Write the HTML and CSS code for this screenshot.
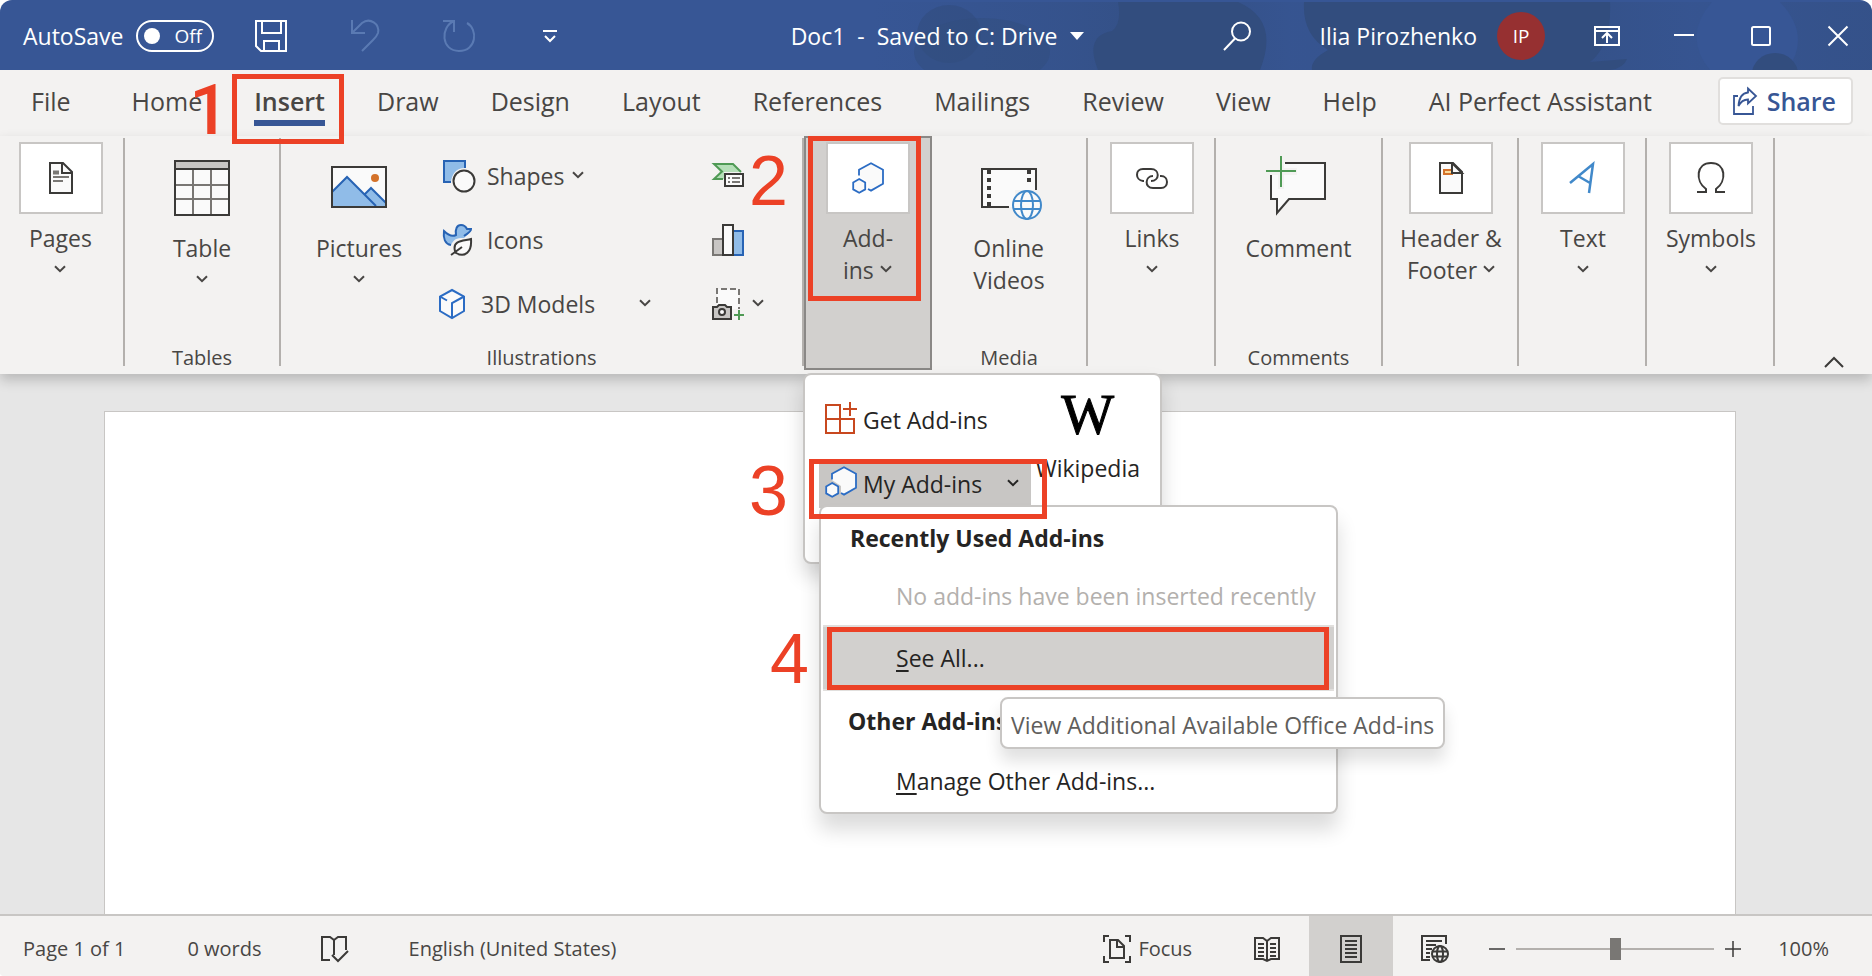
FILE: index.html
```html
<!DOCTYPE html>
<html lang="en">
  <head>
    <meta charset="utf-8" />
    <meta name="viewport" content="width=device-width, initial-scale=1" />
    <title>Doc1 - Word</title>
    <link rel="stylesheet" href="styles.css">
  </head>
  <body>
    <svg class="sprite" aria-hidden="true">
      <symbol id="chevron" viewBox="0 0 12 8">
        <path d="M1 1.2 L6 6.2 L11 1.2" fill="none" stroke="currentColor" stroke-width="2" />
      </symbol>
      <symbol id="hexagons" viewBox="0 0 32 32">
        <path d="M19 1.5 L31 8 V22 L19 29 L16 27.5 V20 L7 14 V8 Z" fill="#fafafa" />
        <path d="M7 13.5 V7.8 L19 1.2 L31 7.8 V21.8 L19 28.6 L16 27" fill="none" stroke="#2b6cc4" stroke-width="1.8" />
        <path d="M7.2 17 L13.2 20.4 V27.4 L7.2 30.8 L1.2 27.4 V20.4 Z" fill="#fafafa" stroke="#2b6cc4" stroke-width="1.8" />
      </symbol>
    </svg>
    <div class="window">
      <!-- Title bar -->
      <header class="titlebar">
        <svg class="titlebar-art" viewBox="0 0 1000 70" preserveAspectRatio="xMaxYMid slice" aria-hidden="true">
          <defs>
            <linearGradient id="haze">
              <stop offset="0" stop-color="#324d7e" stop-opacity="0" />
              <stop offset="0.2" stop-color="#324d7e" stop-opacity="0.4" />
              <stop offset="0.3" stop-color="#324d7e" stop-opacity="0.7" />
              <stop offset="0.42" stop-color="#324d7e" stop-opacity="0.2" />
              <stop offset="0.72" stop-color="#324d7e" stop-opacity="0.5" />
              <stop offset="0.82" stop-color="#324d7e" stop-opacity="0.2" />
              <stop offset="1" stop-color="#324d7e" stop-opacity="0.5" />
            </linearGradient>
          </defs>
          <rect y="2" width="1000" height="68" fill="url(#haze)" />
          <ellipse cx="77" cy="34" rx="32" ry="29" opacity="0.6" />
          <ellipse cx="110" cy="52" rx="68" ry="34" opacity="0.5" />
          <path d="M226 70 Q212 36 240 31 Q250 24 246 2 H366 Q408 20 388 70 Z" />
          <path d="M432 2 H738 Q740 45 718 62 L755 59 Q752 68 738 70 H440 Q438 60 456 50 Q430 35 432 2 Z" />
          <path d="M840 2 H908 Q940 36 915 70 H838 Q810 36 840 2 Z" fill="#375695" />
          <ellipse cx="903" cy="74" rx="23" ry="21" />
        </svg>
        <div class="quick-access">
          <label class="autosave">
            AutoSave
            <span class="toggle">
              <input type="checkbox" />
              Off
            </span>
          </label>
          <button class="icon-btn" aria-label="Save">
            <svg width="32" height="32" viewBox="0 0 32 32" fill="none" stroke="#fff" stroke-width="2">
              <path d="M1 1 H31 V31 H6 L1 26 Z M7 1 V13 H26 V1 M9 31 V21 H24 V31" />
            </svg>
          </button>
          <button class="icon-btn dim" aria-label="Undo">
            <svg width="28" height="32" viewBox="0 0 28 32" fill="none" stroke="currentColor" stroke-width="2">
              <path d="M1 0 V13 H14 M1 13 L11 3 C19 -3 29 4 27 13 C26 16 24 18 22 20 L11 31" />
            </svg>
          </button>
          <button class="icon-btn dim" aria-label="Redo">
            <svg width="36" height="32" viewBox="0 0 36 32" fill="none" stroke="currentColor" stroke-width="2">
              <path d="M0 1 H11 V12 M11 1 C-3 7 -2 31 16 31 C34 31 35 9 24 3" />
            </svg>
          </button>
          <button class="icon-btn" aria-label="Customize Quick Access Toolbar">
            <svg width="14" height="14" viewBox="0 0 14 14" fill="none" stroke="#fff" stroke-width="2">
              <path d="M0 2 H14 M2 7 L7 12 L12 7" />
            </svg>
          </button>
        </div>
        <button class="doc-title">
          Doc1&nbsp; -&nbsp; Saved to C: Drive
          <svg width="14" height="8" viewBox="0 0 14 8"><path d="M0 0 H14 L7 8 Z" fill="#fff" /></svg>
        </button>
        <div class="window-tools">
          <button class="icon-btn search" aria-label="Search">
            <svg width="28" height="30" viewBox="0 0 28 30" fill="none" stroke="#fff" stroke-width="2">
              <circle cx="18" cy="10.500" r="9" />
              <path d="M12 17.500 L1 29" />
            </svg>
          </button>
          <button class="account">
            Ilia Pirozhenko
            <span class="avatar">IP</span>
          </button>
          <div class="window-buttons">
            <button class="icon-btn" aria-label="Ribbon Display Options">
              <svg width="28" height="22" viewBox="0 0 28 22" fill="none" stroke="#fff" stroke-width="2">
                <path d="M2 2 H26 V20 H2 Z M2 6 H26 M14 18 V9 M9 13 L14 8 L19 13" />
              </svg>
            </button>
            <button class="icon-btn" aria-label="Minimize">
              <svg width="28" height="22" viewBox="0 0 28 22" stroke="#fff" stroke-width="2"><path d="M4 10 H24" /></svg>
            </button>
            <button class="icon-btn" aria-label="Maximize">
              <svg width="28" height="22" viewBox="0 0 28 22" fill="none" stroke="#fff" stroke-width="2">
                <rect x="5" y="2" width="18" height="18" rx="1.500" />
              </svg>
            </button>
            <button class="icon-btn" aria-label="Close">
              <svg width="28" height="22" viewBox="0 0 28 22" stroke="#fff" stroke-width="2">
                <path d="M4.500 1.500 L23.500 20.500 M23.500 1.500 L4.500 20.500" />
              </svg>
            </button>
          </div>
        </div>
      </header>

      <!-- Ribbon tabs -->
      <nav class="tabs">
        <button class="tab">File</button>
        <button class="tab">Home</button>
        <button class="tab active">
          Insert
          <span class="callout callout-insert"><span class="callout-num plain">1</span></span>
        </button>
        <button class="tab">Draw</button>
        <button class="tab">Design</button>
        <button class="tab">Layout</button>
        <button class="tab">References</button>
        <button class="tab">Mailings</button>
        <button class="tab">Review</button>
        <button class="tab">View</button>
        <button class="tab">Help</button>
        <button class="tab">AI Perfect Assistant</button>
        <button class="share">
          <svg width="24" height="28" viewBox="0 0 24 28" fill="none" stroke="currentColor" stroke-width="1.800">
            <path d="M5 9 H1 V27 H20 V19" />
            <path d="M15 1.500 L23 9 L15 16.500 V12.500 C10 12.500 7.500 15 5.500 19 C6 11 9 6 15 5.500 Z" />
          </svg>
          Share
        </button>
      </nav>

      <!-- Ribbon groups -->
      <div class="ribbon">
        <section class="group group-pages">
          <button class="tool">
            <span class="tile">
              <svg width="32" height="32" viewBox="0 0 32 32">
                <path d="M5 1 H18 L27 10 V31 H5 Z" fill="#fafafa" stroke="#3b3a38" stroke-width="2" />
                <path d="M17 1 V11 H27" fill="none" stroke="#3b3a38" stroke-width="2" />
                <path d="M8 10.500 H14" stroke="#797774" stroke-width="4" />
                <path d="M8 15 H24 M8 19 H18" stroke="#797774" stroke-width="2" />
              </svg>
            </span>
            <span class="tool-label">Pages<br /><svg class="chev"><use href="#chevron" /></svg></span>
          </button>
        </section>

        <section class="group group-tables">
          <button class="tool">
            <svg class="big-icon" viewBox="0 0 60 82">
              <rect x="3" y="19" width="54" height="54" fill="#fafafa" />
              <rect x="3" y="19" width="54" height="8" fill="#c8c6c4" />
              <path d="M21 27 V73 M39 27 V73 M3 43 H57 M3 57 H57" stroke="#797774" stroke-width="2" />
              <path d="M3 19 H57 V73 H3 Z M3 27 H57" fill="none" stroke="#3b3a38" stroke-width="2" />
            </svg>
            <span class="tool-label">Table<br /><svg class="chev"><use href="#chevron" /></svg></span>
          </button>
          <h2 class="group-label">Tables</h2>
        </section>

        <section class="group group-illustrations">
          <div class="group-body">
            <button class="tool pictures">
              <svg class="big-icon" viewBox="0 0 60 82">
                <rect x="3" y="25" width="54" height="40" fill="#fafafa" />
                <path d="M3 50 L18 35 L35 52 L42 46 L57 60 V65 H3 Z" fill="#90bce8" />
                <path d="M3 50 L18 35 L47 64 M36 52 L42 46 L57 61" fill="none" stroke="#2763b4" stroke-width="2" />
                <circle cx="46" cy="36" r="4" fill="#d4722a" />
                <rect x="3" y="25" width="54" height="40" fill="none" stroke="#3b3a38" stroke-width="2" />
              </svg>
              <span class="tool-label">Pictures<br /><svg class="chev"><use href="#chevron" /></svg></span>
            </button>
            <div class="rows">
              <button class="row">
                <svg width="32" height="32" viewBox="0 0 32 32">
                  <path d="M1 1 H22 V8 C13 8 9 14 8 22 H1 Z" fill="#90bce8" />
                  <path d="M22 8 V1 H1 V22 H8" fill="none" stroke="#2763b4" stroke-width="2" />
                  <circle cx="21" cy="21" r="10.500" fill="#fafafa" stroke="#3b3a38" stroke-width="2" />
                </svg>
                Shapes <svg class="chev"><use href="#chevron" /></svg>
              </button>
              <button class="row">
                <svg width="32" height="32" viewBox="0 0 32 32" stroke-width="2">
                  <path d="M8 21 C2 20 0 14 1 7 C5 11 9 13 13 11 C12 5 14 1 18 1 C22 1 23 3 24 5 H28 C28 8 25 9 24 11 L21 14 C13 14 11 15 8 21 Z" fill="#90bce8" />
                  <path d="M8 21 C2 20 0 14 1 7 C5 11 9 13 13 11 C12 5 14 1 18 1 C22 1 23 3 24 5 H28 C28 8 25 9 21 12" fill="none" stroke="#2763b4" />
                  <path d="M12 27 C9 16 21 17 28 15 C29 28 22 34 13 29 Z" fill="#fafafa" stroke="#3b3a38" />
                  <path d="M8 31 L19 23" stroke="#3b3a38" />
                </svg>
                Icons
              </button>
              <button class="row models">
                <svg width="28" height="32" viewBox="0 0 28 32" fill="none" stroke="#2b6cc4" stroke-width="2">
                  <path d="M14 2 L26 8.500 V23 L14 30 L2 23 V8.500 Z" fill="#fafafa" />
                  <path d="M14 30 V15 L26 8.500 M2 8.500 L9 12.500" />
                </svg>
                3D Models <svg class="chev"><use href="#chevron" /></svg>
              </button>
            </div>
            <div class="rows">
              <button class="row" aria-label="SmartArt">
                <svg width="32" height="32" viewBox="0 0 32 32">
                  <path d="M2 4 H21 L28 12 H12 V19 H2 L8 12 Z" fill="#b5dfb8" />
                  <path d="M29 12 L21 4 H2 L10 11.500 L2 19 H11" fill="none" stroke="#4f9a55" stroke-width="2" />
                  <rect x="13" y="14" width="18" height="12" fill="#fafafa" stroke="#3b3a38" stroke-width="2" />
                  <path d="M16 18 H18 M20 18 H28 M16 22 H18 M20 22 H28" stroke="#797774" stroke-width="2" />
                </svg>
              </button>
              <button class="row" aria-label="Chart">
                <svg width="32" height="32" viewBox="0 0 32 32" stroke-width="2">
                  <rect x="1" y="15" width="10" height="16" fill="#c8c6c4" stroke="#797774" />
                  <rect x="21" y="7" width="10" height="24" fill="#90bce8" stroke="#2763b4" />
                  <rect x="11" y="1" width="10" height="30" fill="#fafafa" stroke="#3b3a38" />
                </svg>
              </button>
              <button class="row" aria-label="Screenshot">
                <svg width="32" height="32" viewBox="0 0 32 32" stroke-width="2">
                  <rect x="5" y="1" width="22" height="20" fill="#fafafa" />
                  <path d="M5 15 V1 H27 V21" fill="none" stroke="#797774" stroke-dasharray="6 3" />
                  <path d="M1 19 H5 L7 17 H13 L15 19 H19 V31 H1 Z" fill="#c8c6c4" stroke="#3b3a38" />
                  <circle cx="10" cy="24" r="3" fill="#fafafa" stroke="#3b3a38" />
                  <path d="M27 22 V32 M22 27 H32" stroke="#4f9a55" />
                </svg>
                <svg class="chev"><use href="#chevron" /></svg>
              </button>
            </div>
          </div>
          <h2 class="group-label">Illustrations</h2>
        </section>

        <section class="group group-addins">
          <button class="tool">
            <span class="tile"><svg width="32" height="32"><use href="#hexagons" /></svg></span>
            <span class="tool-label left">Add-<br />ins <svg class="chev"><use href="#chevron" /></svg></span>
          </button>
          <div class="flyout">
            <div class="flyout-list">
              <button class="flyout-item">
                <svg width="32" height="32" viewBox="0 0 32 32" fill="none" stroke="#c8481f" stroke-width="2">
                  <path d="M1 3 H15 V31 H1 Z M1 17 H29 V31 H15 M25 0 V14 M18 7 H32" />
                </svg>
                Get Add-ins
              </button>
              <button class="flyout-item pressed">
                <svg width="32" height="32"><use href="#hexagons" /></svg>
                My Add-ins
                <svg class="chev"><use href="#chevron" /></svg>
              </button>
            </div>
            <button class="wiki">
              <span class="wiki-logo">W</span>
              Wikipedia
            </button>
            <div class="submenu">
              <h3>Recently Used Add-ins</h3>
              <p>No add-ins have been inserted recently</p>
              <button class="submenu-item selected"><u>S</u>ee All...</button>
              <h3 class="other">Other Add-ins</h3>
              <button class="submenu-item"><u>M</u>anage Other Add-ins...</button>
              <div class="tooltip" role="tooltip">View Additional Available Office Add-ins</div>
              <span class="callout callout-see-all"><span class="callout-num">4</span></span>
            </div>
            <span class="callout callout-my-addins"><span class="callout-num">3</span></span>
          </div>
          <span class="callout callout-addins"><span class="callout-num">2</span></span>
        </section>

        <section class="group group-media">
          <button class="tool">
            <svg class="big-icon" viewBox="0 0 60 82">
              <path d="M3 27 H57 V48 H36 V65 H3 Z" fill="#fafafa" />
              <path d="M30 65 H3 V27 H57 V48" fill="none" stroke="#3b3a38" stroke-width="2" />
              <path d="M10 28 V66 M50 28 V42" stroke="#3b3a38" stroke-width="4" stroke-dasharray="4 4" />
              <g fill="none" stroke="#4189ca" stroke-width="2">
                <circle cx="48" cy="63" r="14" fill="#fafafa" />
                <ellipse cx="48" cy="63" rx="6" ry="14" />
                <path d="M35 59 H61 M35 67 H61" />
              </g>
            </svg>
            <span class="tool-label left">Online<br />Videos</span>
          </button>
          <h2 class="group-label">Media</h2>
        </section>

        <section class="group group-links">
          <button class="tool">
            <span class="tile">
              <svg width="32" height="32" viewBox="0 0 32 32" fill="none" stroke="#3b3a38" stroke-width="2">
                <path d="M8 19 H7 C-1 18 -1 7 7 7 H15 C24 7 24 19 15 19" />
                <path d="M24 14 H25 C33 14 33 26 25 26 H17 C8 26 9 14 17 14" />
              </svg>
            </span>
            <span class="tool-label">Links<br /><svg class="chev"><use href="#chevron" /></svg></span>
          </button>
        </section>

        <section class="group group-comments">
          <button class="tool">
            <svg class="big-icon" viewBox="0 0 60 82">
              <path d="M2 21 H57 V57 H21 L9 71 V57 H2 Z" fill="#fafafa" />
              <path d="M-3 13 H16 V26 H29 V33 H16 V47 H10 V33 H-3 Z" fill="#f3f2f1" />
              <path d="M17 21 H57 V57 H21 L9 71 V57 H3 V33" fill="none" stroke="#3b3a38" stroke-width="2" />
              <path d="M13 14 V45 M-2 29 H28" stroke="#4f9a55" stroke-width="2" />
            </svg>
            <span class="tool-label">Comment</span>
          </button>
          <h2 class="group-label">Comments</h2>
        </section>

        <section class="group group-header">
          <button class="tool">
            <span class="tile">
              <svg width="32" height="32" viewBox="0 0 32 32">
                <path d="M5 1 H18 L27 10 V31 H5 Z" fill="#fafafa" stroke="#3b3a38" stroke-width="2" />
                <rect x="9" y="8" width="8" height="4" fill="#fbdb9a" stroke="#d4722a" stroke-width="2" />
                <path d="M17 1 V11 H27 L17 1" fill="#fafafa" stroke="#3b3a38" stroke-width="2" />
              </svg>
            </span>
            <span class="tool-label">Header &amp;<br />Footer <svg class="chev"><use href="#chevron" /></svg></span>
          </button>
        </section>

        <section class="group group-text">
          <button class="tool">
            <span class="tile">
              <svg width="32" height="32" viewBox="0 0 32 32" fill="none" stroke="#4189ca" stroke-width="2.500">
                <path d="M3 21 L26 2 L22 31 M11 14 L23 21" />
              </svg>
            </span>
            <span class="tool-label">Text<br /><svg class="chev"><use href="#chevron" /></svg></span>
          </button>
        </section>

        <section class="group group-symbols">
          <button class="tool">
            <span class="tile">
              <svg width="32" height="32" viewBox="0 0 32 32" fill="none" stroke="#3b3a38" stroke-width="2">
                <path d="M2 30 H11 V27 C0 19 1 1 16 1 C31 1 32 19 21 27 V30 H30" />
              </svg>
            </span>
            <span class="tool-label">Symbols<br /><svg class="chev"><use href="#chevron" /></svg></span>
          </button>
        </section>

        <button class="collapse" aria-label="Collapse the Ribbon">
          <svg width="20" height="12" viewBox="0 0 20 12" fill="none" stroke="#3b3a38" stroke-width="2">
            <path d="M1 11 L10 2 L19 11" />
          </svg>
        </button>
      </div>

      <main class="workspace">
        <div class="page"></div>
      </main>

      <!-- Status bar -->
      <footer class="statusbar">
        <button class="status-text pages-count">Page 1 of 1</button>
        <button class="status-text words">0 words</button>
        <button class="icon-btn proofing" aria-label="Proofing">
          <svg width="30" height="28" viewBox="0 0 30 28" fill="none" stroke="#3b3a38" stroke-width="2">
            <path d="M10 25 H2 V2 H10 L14 5 L18 2 H26 V15 M14 5 V20 M12 20 L18 26 L28 16" />
          </svg>
        </button>
        <button class="status-text">English (United States)</button>
        <button class="status-text focus">
          <svg width="28" height="28" viewBox="0 0 28 28" fill="none" stroke="#3b3a38" stroke-width="2">
            <path d="M1 7 V1 H6 M22 1 H27 V7 M27 21 V27 H22 M6 27 H1 V21" />
            <path d="M7 5 H15 L21 11 V23 H7 Z M14 5 V12 H21" />
          </svg>
          Focus
        </button>
        <button class="view-btn" aria-label="Read Mode">
          <svg width="28" height="28" viewBox="0 0 28 28" fill="none" stroke="#3b3a38" stroke-width="2">
            <path d="M2 3 H10 L14 6 L18 3 H26 V24 H18 L14 26 L10 24 H2 Z M14 6 V26" />
            <path d="M5 9 H11 M5 13 H11 M5 17 H11 M5 21 H11 M17 9 H23 M17 13 H23 M17 17 H23 M17 21 H23" />
          </svg>
        </button>
        <button class="view-btn current" aria-label="Print Layout">
          <svg width="28" height="28" viewBox="0 0 28 28" fill="none" stroke="#3b3a38" stroke-width="2">
            <path d="M4 1 H24 V27 H4 Z M8 6 H20 M8 10 H20 M8 14 H20 M8 18 H20 M8 22 H20" />
          </svg>
        </button>
        <button class="view-btn" aria-label="Web Layout">
          <svg width="28" height="28" viewBox="0 0 28 28" fill="none" stroke="#3b3a38" stroke-width="2">
            <path d="M9 25 H1 V1 H25 V9 M5 6 H21 M5 10 H15 M5 14 H11 M5 18 H9 M5 22 H9" />
            <circle cx="19" cy="19" r="8" />
            <ellipse cx="19" cy="19" rx="3" ry="8" />
            <path d="M11 16.500 H27 M11 21.500 H27" />
          </svg>
        </button>
        <div class="zoom">
          <button class="icon-btn" aria-label="Zoom Out">
            <svg width="16" height="16" viewBox="0 0 16 16" stroke="#3b3a38" stroke-width="1.500"><path d="M0 8 H16" /></svg>
          </button>
          <input type="range" min="0" max="200" value="100" aria-label="Zoom" />
          <button class="icon-btn" aria-label="Zoom In">
            <svg width="16" height="16" viewBox="0 0 16 16" stroke="#3b3a38" stroke-width="1.500"><path d="M0 8 H16 M8 0 V16" /></svg>
          </button>
        </div>
        <button class="status-text percent">100%</button>
      </footer>
    </div>
  </body>
</html>
```

FILE: styles.css
```css
* {
  box-sizing: border-box;
}
body {
  margin: 0;
  background: #fff;
  color: #484644;
  font-family: "Segoe UI", "Open Sans", sans-serif;
  font-size: 23px;
  line-height: 32px;
}
button {
  margin: 0;
  padding: 0;
  border: none;
  background: none;
  color: inherit;
  font: inherit;
  white-space: nowrap;
  cursor: pointer;
}
svg {
  flex: none;
  overflow: visible;
}
.sprite {
  position: absolute;
  width: 0;
  height: 0;
}
.window {
  display: flex;
  flex-direction: column;
  min-height: 100vh;
  border-radius: 12px 12px 4px 4px;
  overflow: hidden;
  background: #f3f2f1;
}
.icon-btn {
  display: flex;
  align-items: center;
}

/* title bar */
.titlebar {
  position: relative;
  display: grid;
  grid-template-columns: 1fr auto 1fr;
  align-items: center;
  height: 70px;
  padding: 2px 20px 0 23px;
  background: #375695;
  color: #fff;
}
.titlebar-art {
  position: absolute;
  top: 0;
  right: 0;
  width: 1000px;
  height: 70px;
  overflow: hidden;
  fill: #324d7e;
}
.quick-access,
.doc-title,
.window-tools {
  position: relative;
  display: flex;
  align-items: center;
}
.quick-access {
  gap: 64px;
}
.autosave {
  display: flex;
  align-items: center;
  gap: 13px;
  margin-right: -23px;
}
.toggle {
  display: flex;
  align-items: center;
  gap: 14px;
  height: 32px;
  padding: 0 10px 0 6px;
  border: 2px solid #fff;
  border-radius: 16px;
  font-size: 19px;
}
.toggle input {
  appearance: none;
  width: 16px;
  height: 16px;
  margin: 0;
  border-radius: 50%;
  background: #fff;
}
.dim {
  color: #5a7ab3;
}
.doc-title {
  gap: 13px;
}
.window-tools {
  justify-content: flex-end;
}
.search {
  margin-right: 69px;
}
.account {
  display: flex;
  align-items: center;
  gap: 20px;
  margin-right: 48px;
}
.avatar {
  width: 48px;
  height: 48px;
  border-radius: 50%;
  background: #963031;
  font-size: 19px;
  line-height: 48px;
  text-align: center;
}
.window-buttons {
  display: flex;
  gap: 49px;
}

/* tabs */
.tabs {
  display: flex;
  align-items: center;
  height: 66px;
  padding: 0 19px 4px 31px;
  font-size: 25px;
}
.tab {
  position: relative;
  margin-right: 52px;
}
.tab:first-child {
  margin-right: 61px;
}
.tab.active {
  font-weight: 600;
}
.tab.active::after {
  content: "";
  position: absolute;
  left: 0;
  right: 0;
  bottom: -9px;
  height: 6px;
  background: #375695;
}
.share {
  display: flex;
  align-items: center;
  gap: 10px;
  height: 48px;
  margin-left: auto;
  padding: 0 15px 0 13px;
  border: 2px solid #e1dfdd;
  border-radius: 5px;
  background: #fff;
  color: #375695;
  font-weight: 600;
}

/* ribbon */
.ribbon {
  position: relative;
  z-index: 2;
  display: flex;
  height: 238px;
  background: #f3f2f1;
  box-shadow: 0 6px 12px rgba(0, 0, 0, 0.2);
}
.group {
  position: relative;
  display: flex;
  flex-direction: column;
  align-items: center;
  height: 228px;
  margin-top: 2px;
  padding-top: 4px;
  border-right: 2px solid #b3b0ad;
}
.group-pages {
  width: 125px;
  padding-right: 2px;
}
.group-tables {
  width: 156px;
}
.group-illustrations {
  width: 523px;
}
.group-addins {
  width: 128px;
  height: 234px;
  margin-top: 0;
  border: 2px solid #8a8886;
  background: #d2d0ce;
}
.group-media {
  width: 156px;
}
.group-links {
  width: 128px;
}
.group-comments {
  width: 167px;
}
.group-header {
  width: 136px;
}
.group-text,
.group-symbols {
  width: 128px;
}
.group-links,
.group-header,
.group-text,
.group-symbols {
  padding-left: 2px;
}
.group-body {
  display: flex;
  width: 100%;
}
.group-label {
  margin: auto 0 0;
  font-size: 20px;
  font-weight: 400;
  line-height: 16px;
}
.tool {
  display: flex;
  flex-direction: column;
  align-items: center;
}
.tile {
  display: flex;
  align-items: center;
  justify-content: center;
  width: 84px;
  height: 72px;
  margin-bottom: 8px;
  border: 2px solid #c8c6c4;
  background: #fff;
}
.big-icon {
  width: 60px;
  height: 82px;
  margin-bottom: 8px;
}
.left {
  text-align: left;
}
.chev {
  width: 12px;
  height: 8px;
  margin-bottom: 6px;
}
.pictures {
  width: 156px;
}
.rows {
  display: flex;
  flex-direction: column;
  width: 269px;
  padding: 2px 0 0 6px;
}
.row {
  display: flex;
  align-items: center;
  gap: 12px;
  height: 64px;
}
.row .chev {
  margin: 0 0 2px;
}
.row:not(.models) .chev {
  margin-left: -4px;
}
.models {
  margin-left: -5px;
  gap: 15px;
}
.models .chev {
  margin-left: 29px;
}
.rows + .rows {
  width: auto;
}
.collapse {
  align-self: flex-end;
  margin: 0 28px 6px auto;
  line-height: 0;
}

/* add-ins flyout */
.flyout {
  position: absolute;
  top: 235px;
  left: -3px;
  display: flex;
  gap: 4px;
  width: 359px;
  height: 191px;
  padding: 21px 20px 0 14px;
  border: 2px solid #c8c6c4;
  border-radius: 8px;
  background: #fff;
  box-shadow: 0 12px 20px rgba(0, 0, 0, 0.16);
  color: #252423;
}
.flyout-list {
  display: flex;
  flex-direction: column;
  gap: 16px;
  width: 217px;
}
.flyout-item {
  display: flex;
  align-items: center;
  gap: 6px;
  height: 48px;
  padding: 0 6px;
}
.flyout-item svg:first-child {
  margin-bottom: 4px;
}
.flyout-item.pressed {
  background: #c8c6c4;
}
.flyout-item .chev {
  margin: 0 6px 2px auto;
}
.wiki {
  display: flex;
  flex-direction: column;
  align-items: center;
}
.wiki-logo {
  margin-bottom: 18px;
  color: #000;
  font-family: "Liberation Serif", serif;
  font-size: 56px;
  line-height: 38px;
  -webkit-text-stroke: 1px #000;
}
.submenu {
  position: absolute;
  top: 130px;
  left: 14px;
  display: flex;
  flex-direction: column;
  width: 519px;
  height: 309px;
  padding: 15px 2px;
  border: 2px solid #c8c6c4;
  border-radius: 8px;
  background: #fff;
  box-shadow: 0 16px 20px rgba(0, 0, 0, 0.14);
}
.submenu h3 {
  margin: 0 0 26px 27px;
  font-size: 23px;
  font-weight: 700;
}
.submenu .other {
  margin: 14px 0 26px 25px;
}
.submenu p {
  margin: 0 0 13px 73px;
  color: #b3b0ad;
  white-space: nowrap;
}
.submenu-item {
  padding-left: 73px;
  line-height: 36px;
  text-align: left;
}
.submenu u {
  text-underline-offset: 3px;
}
.submenu-item.selected {
  border: solid #e1dfdd;
  border-width: 2px 0;
  background: #d2d0ce;
  line-height: 62px;
}
.tooltip {
  position: absolute;
  top: 190px;
  left: 179px;
  padding: 10px 9px 6px;
  border: 2px solid #c8c6c4;
  border-radius: 8px;
  background: #fff;
  box-shadow: 0 12px 16px rgba(0, 0, 0, 0.12);
  color: #605e5c;
  white-space: nowrap;
}

/* numbered callouts */
.callout {
  position: absolute;
  z-index: 3;
  border: 5px solid #ec4126;
  pointer-events: none;
}
.callout-num {
  position: absolute;
  color: #ec4126;
  font-family: "Liberation Sans", Arial, sans-serif;
  font-size: 70px;
  font-weight: 400;
  line-height: 70px;
}
.callout-num.plain {
  font-family: Roboto, sans-serif;
  font-weight: 500;
}
.callout-insert {
  top: -11px;
  left: -22px;
  width: 112px;
  height: 70px;
}
.callout-insert .callout-num {
  top: -4px;
  left: -48px;
}
.callout-addins {
  top: -2px;
  left: 2px;
  width: 113px;
  height: 165px;
}
.callout-addins .callout-num {
  top: 5px;
  left: -64px;
}
.callout-my-addins {
  top: 84px;
  left: 4px;
  width: 238px;
  height: 60px;
}
.callout-my-addins .callout-num {
  top: -8px;
  left: -65px;
}
.callout-see-all {
  top: 120px;
  left: 6px;
  width: 502px;
  height: 63px;
}
.callout-see-all .callout-num {
  top: -8px;
  left: -62px;
}

/* document */
.workspace {
  display: flex;
  flex: 1;
  padding: 37px 136px 0 104px;
  background: #e6e6e6;
}
.page {
  flex: 1;
  border: 1px solid #c8c6c4;
  border-bottom: none;
  background: #fff;
}

/* status bar */
.statusbar {
  display: flex;
  align-items: center;
  height: 62px;
  padding: 0 43px 0 23px;
  border-top: 2px solid #c8c6c4;
  background: #f3f2f1;
  font-size: 20px;
}
.statusbar > * {
  padding-top: 6px;
}
.pages-count {
  margin-right: 62px;
}
.words {
  margin-right: 58px;
}
.proofing {
  margin-right: 59px;
}
.focus {
  display: flex;
  align-items: center;
  gap: 7px;
  margin-left: auto;
  margin-right: 33px;
}
.view-btn {
  display: flex;
  align-items: center;
  justify-content: center;
  width: 84px;
  height: 60px;
}
.view-btn.current {
  background: #d2d0ce;
}
.zoom {
  display: flex;
  align-items: center;
  gap: 11px;
  margin-left: 12px;
  margin-right: 37px;
}
.zoom input {
  appearance: none;
  width: 198px;
  height: 22px;
  margin: 0;
  background: none;
}
.zoom input::-webkit-slider-runnable-track {
  height: 2px;
  background: #b3b0ad;
}
.zoom input::-webkit-slider-thumb {
  appearance: none;
  width: 11px;
  height: 22px;
  margin-top: -10px;
  background: #797774;
}
```
